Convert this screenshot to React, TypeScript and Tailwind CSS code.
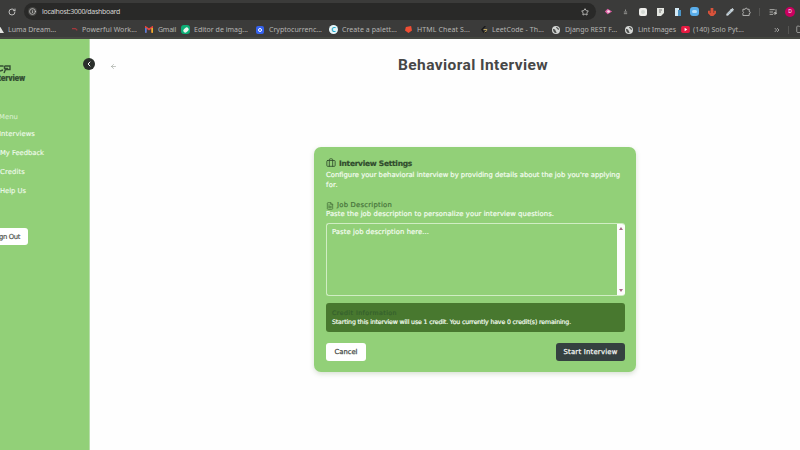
import { useLayoutEffect, useRef, useState } from 'react';
import type { ReactNode } from 'react';
import { ArrowLeft, Briefcase, ChevronLeft, ChevronsRight, FileText, Folder, Info, ListMusic, Pencil, RotateCw, Star } from 'lucide-react';

/** A single line of text whose tracking is computed so it spans `w` pixels. */
function Line({ w, children, className = '' }: { w: number; children: string; className?: string }) {
  const ref = useRef<HTMLSpanElement>(null);
  const [spacing, setSpacing] = useState(0);
  useLayoutEffect(() => {
    if (ref.current) setSpacing((w - ref.current.getBoundingClientRect().width) / children.length);
  }, [w, children]);
  return (
    <span ref={ref} className={`inline-block whitespace-pre ${className}`} style={{ letterSpacing: spacing }}>
      {children}
    </span>
  );
}

function Bookmark({ className, icon, label, w }: { className: string; icon: ReactNode; label: string; w: number }) {
  return (
    <div className={`flex h-full shrink-0 items-center ${className}`}>
      <span className="flex w-[13px] shrink-0 items-center">{icon}</span>
      <Line w={w}>{label}</Line>
    </div>
  );
}

function GlobeIcon() {
  return (
    <svg viewBox="0 0 16 16" className="size-[8px]">
      <circle cx="8" cy="8" r="8" fill="#d3d5d3" />
      <path d="M2 6c3 0 5 1 5 3s2 2 2 5c-4 1-7-3-7-8ZM8 2c0 3 2 2 3 4s2 2 3 1c0-3-3-5-6-5Z" fill="#4a4c4a" />
    </svg>
  );
}

function Browser() {
  return (
    <header className="h-[39px] w-full shrink-0 overflow-hidden bg-[#3b3b3a] font-['Noto_Sans',sans-serif] text-[7px] leading-[10px] text-[#b5b5b3]">
      <div className="flex h-[22px] items-center pt-px">
        <div className="flex w-[24px] justify-end pr-[8px]">
          <RotateCw className="size-[8px] text-[#d0d0ce]" strokeWidth={2.6} />
        </div>
        <div className="flex h-[17px] w-[572px] items-center rounded-full bg-[#292928] pr-[7px] pl-[4px]">
          <span className="flex size-[9px] items-center justify-center rounded-full bg-[#454543]">
            <Info className="size-[7px] text-[#d0d0ce]" strokeWidth={2.4} />
          </span>
          <Line w={78} className="ml-[5px] text-[#d4d4d2]">localhost:3000/dashboard</Line>
          <Star className="ml-auto size-[8px] text-[#dadad8]" strokeWidth={2.4} />
        </div>
        <div className="flex w-[204px] items-center pl-[8px]">
          <span className="flex w-[18px]"><svg viewBox="0 0 10 10" className="size-[9px]"><path d="M1 5 4 2l5 3-5 3z" fill="#df5fa5" /><circle cx="5" cy="5" r="1.5" fill="#f7dbea" /></svg></span>
          <span className="flex w-[17px]"><svg viewBox="0 0 6 8" className="ml-px h-[8px] w-[5px]"><path d="M3 1v2M1 4h4M1 6h4" stroke="#92928f" strokeWidth="1.2" /></svg></span>
          <span className="flex w-[18px]"><i className="flex size-[8px] items-center justify-center rounded-[2px] bg-[#eeeeeb]"><i className="size-[4px] rounded-full bg-[#d2d8d3]" /></i></span>
          <span className="flex w-[17px]"><svg viewBox="0 0 8 8" className="size-[8px]"><path d="M0 0h7v5L4 8H0z" fill="#e4e6e1" /><path d="M2 2h3M2 4h2" stroke="#777" /></svg></span>
          <span className="flex w-[16px]"><svg viewBox="0 0 8 8" className="size-[8px]"><path d="M1 0h4v8H1z" fill="#d5eaf5" /><path d="M4 2h3v6H4z" fill="#4b94c5" /></svg></span>
          <span className="flex w-[18px]"><i className="flex size-[9px] items-center justify-center rounded-[3px] bg-[#59adea]"><i className="h-[3px] w-[5px] rounded-full bg-[#b9e0fa]" /></i></span>
          <span className="flex w-[18px]"><svg viewBox="0 0 9 9" className="size-[8px]"><path d="M3 0h3v3h3v3L6 9H3L0 6V3h3z" fill="#d9533b" /><path d="M2 4h1v1H2zm4 0h1v1H6z" fill="#321f1b" /></svg></span>
          <span className="flex w-[16px]"><Pencil className="size-[8px] text-[#e2e7ea]" fill="#aac1cf" strokeWidth={2.5} /></span>
          <span className="flex w-[17px]"><svg viewBox="0 0 10 10" className="size-[9px]"><path d="M1 2.5h2.5a1.2 1.2 0 0 1 2.4 0H8V5a1.2 1.2 0 0 1 0 2.4v2H1V7a1.2 1.2 0 0 0 0-2z" fill="none" stroke="#bcbcba" strokeWidth="1" strokeLinejoin="round" /></svg></span>
          <span className="h-[8px] w-px bg-[#555553]" />
          <span className="flex w-[25px] justify-center"><ListMusic className="size-[8px] text-[#c5c5c2]" strokeWidth={2.5} /></span>
          <span className="flex size-[10px] items-center justify-center rounded-full bg-[#c9005f] text-[5px] leading-none text-white">D</span>
        </div>
      </div>
      <div className="flex h-[15px] items-center">
        <Bookmark className="-ml-[5px] w-[71px]" w={48} label="Luma Dream..." icon={<svg viewBox="0 0 8 8" className="ml-[2px] size-[7px]"><path d="M3 0 8 8H0z" fill="#e4e4e1" /></svg>} />
        <Bookmark className="w-[79px] pl-[3px]" w={55} label="Powerful Work..." icon={<svg viewBox="0 0 8 8" className="ml-[3px] size-[7px]"><path d="M0 3h4l2 2" stroke="#a3383d" strokeWidth="1.5" fill="none" /></svg>} />
        <Bookmark className="w-[36px]" w={18} label="Gmail" icon={<svg viewBox="0 0 10 8" className="h-[7px] w-[8px]"><path d="M1 8V1l4 3 4-3v7" fill="none" stroke="#e2463d" strokeWidth="2" /><path d="M1 2v6" stroke="#4b82df" strokeWidth="2" /><path d="M9 2v6" stroke="#e8b42d" strokeWidth="2" /></svg>} />
        <Bookmark className="w-[74px]" w={54} label="Editor de imag..." icon={<span className="flex size-[9px] items-center justify-center rounded-[3px] bg-[#0daf76]"><i className="h-[6px] w-[4px] rotate-45 rounded-full bg-[#e7f4ec]" /></span>} />
        <Bookmark className="w-[74px] pl-[1px]" w={53} label="Cryptocurrenc..." icon={<span className="flex size-[8px] items-center justify-center rounded-[2px] bg-[#3562ee]"><i className="size-[4px] rounded-full border border-white" /></span>} />
        <Bookmark className="w-[75px]" w={55} label="Create a palett..." icon={<span className="flex size-[9px] items-center justify-center rounded-full bg-[#e5f6fa] text-[7px] font-bold text-[#26a8c6]">C</span>} />
        <Bookmark className="w-[75px]" w={53} label="HTML Cheat S..." icon={<svg viewBox="0 0 8 8" className="ml-px size-[7px]"><path d="M1 1 7 0l1 5-4 3-4-3z" fill="#ef4e34" /></svg>} />
        <Bookmark className="w-[73px]" w={52} label="LeetCode - Th..." icon={<svg viewBox="0 0 8 8" className="ml-[2px] size-[7px]"><path d="M5 0 1 4l2 3h3" fill="none" stroke="#19191a" strokeWidth="1.5" /><path d="M3 4h4M4 7l3-2" stroke="#d0b467" /></svg>} />
        <Bookmark className="w-[73px]" w={52} label="Django REST F..." icon={<GlobeIcon />} />
        <Bookmark className="w-[55px]" w={38} label="Lint Images" icon={<GlobeIcon />} />
        <Bookmark className="w-[93px]" w={51} label="(140) Solo Pyt..." icon={<svg viewBox="0 0 10 8" className="ml-px h-[7px] w-[9px]"><rect width="10" height="8" rx="2" fill="#e71b42" /><path d="m4 2 3 2-3 2z" fill="white" /></svg>} />
        <ChevronsRight className="size-[8px] shrink-0" strokeWidth={2.5} />
        <span className="ml-[7px] h-[8px] w-px shrink-0 bg-[#555553]" />
        <Folder className="ml-[7px] size-[9px] shrink-0" />
      </div>
      <div className="h-[2px] bg-[#454741]" />
    </header>
  );
}

function Sidebar() {
  return (
    <aside className="relative flex h-full w-[90px] shrink-0 flex-col items-start border-r border-[#b7deaa] bg-[#92d078] text-[6.8px] leading-[10px] text-[#eefaea] [-webkit-text-stroke:0.15px]">
      <div className="mt-[26px] h-[19px] text-[#355033]">
        <svg viewBox="0 0 12 9" className="block h-[9px] w-[12px]" fill="none" stroke="currentColor" strokeWidth="1.4">
          <path d="M0 1h3.5M0 6l3-1M4.5 1H10v3.5H5.5L4 8M4.5 1v2.5H8" />
        </svg>
        <Line w={27} className="-ml-[2px] block h-[9px] font-['Roboto',sans-serif] text-[8.5px] leading-[9px] font-black">terview</Line>
      </div>
      <Line w={19} className="mt-[28px] -ml-px text-[#d3edca]">Menu</Line>
      <Line w={36} className="mt-[7px] -ml-px">Interviews</Line>
      <Line w={44} className="mt-[9px]">My Feedback</Line>
      <Line w={25} className="mt-[9px]">Credits</Line>
      <Line w={26} className="mt-[9px]">Help Us</Line>
      <button className="mt-[32px] flex h-[17px] w-[28px] items-center rounded-r-[3px] bg-white text-[#4f544e] [-webkit-text-stroke:0.2px]"><Line w={21} className="-ml-px">gn Out</Line></button>
      <button className="absolute top-[19px] -right-[6px] flex size-[12px] items-center justify-center rounded-full bg-[#2b302c] text-white"><ChevronLeft className="size-[8px]" strokeWidth={3} /></button>
    </aside>
  );
}

function SettingsCard() {
  return (
    <section className="ml-[224px] flex h-[225px] w-[322px] flex-col rounded-[7px] bg-[#92d078] pt-[11px] pr-[11px] pl-[12px] text-[6.8px] leading-[9px] text-[#f3fcef] shadow-[0_2px_5px_rgba(80,120,65,0.22)] [-webkit-text-stroke:0.2px]">
      <div className="flex h-[10px] items-center text-[#304c2d]">
        <Briefcase className="mr-[4px] size-[10px]" strokeWidth={2} />
        <Line w={73} className="-ml-px text-[7.5px] font-bold">Interview Settings</Line>
      </div>
      <p className="mt-[3px] h-[19px] leading-[9.5px]"><Line w={294} className="block">Configure your behavioral interview by providing details about the job you're applying</Line><Line w={12} className="block">for.</Line></p>
      <div className="mt-[11px] flex h-[9px] items-center text-[#47733b]">
        <FileText className="mr-[3px] size-[8px]" strokeWidth={2.4} />
        <Line w={55}>Job Description</Line>
      </div>
      <Line w={228} className="self-start">Paste the job description to personalize your interview questions.</Line>
      <div className="mt-[4px] flex h-[73px] shrink-0 overflow-hidden rounded-[3px] border border-r-0 border-[#d0edc3]">
        <div className="flex-1 pt-[4px] pl-[5px]"><Line w={97}>Paste job description here...</Line></div>
        <div className="-my-px flex w-[8px] flex-col items-center justify-between bg-[#fcfdfb] py-[4px]">
          <svg viewBox="0 0 4 3" className="h-[3px] w-[4px]"><path d="m0 3 2-3 2 3z" fill="#a66b82" /></svg>
          <svg viewBox="0 0 4 3" className="h-[3px] w-[4px]"><path d="m0 0 2 3 2-3z" fill="#a66b82" /></svg>
        </div>
      </div>
      <div className="mt-[7px] flex h-[29px] shrink-0 flex-col items-start rounded-[3px] bg-[#48782f] pt-[5px] pl-[6px] text-[6.2px] leading-[9px]">
        <Line w={65} className="text-[#35602d]">Credit Information</Line>
        <Line w={239}>Starting this interview will use 1 credit. You currently have 0 credit(s) remaining.</Line>
      </div>
      <div className="mt-[11px] flex justify-between [-webkit-text-stroke:0.25px]">
        <button className="flex h-[18px] w-[40px] items-center justify-center rounded-[3px] bg-white text-[#454b45]"><Line w={23}>Cancel</Line></button>
        <button className="flex h-[18px] w-[69px] items-center justify-center rounded-[3px] bg-[#354140] text-[#f3f6f3]"><Line w={54}>Start Interview</Line></button>
      </div>
    </section>
  );
}

export default function App() {
  return (
    <div className="flex h-[450px] w-[800px] flex-col overflow-hidden bg-[#fefefe] font-['DejaVu_Sans',sans-serif]">
      <Browser />
      <div className="flex min-h-0 flex-1">
        <Sidebar />
        <main className="flex flex-1 flex-col">
          <div className="flex h-[108px] shrink-0 items-start pt-[16px]">
            <ArrowLeft className="mt-[8px] ml-[20px] size-[7px] text-[#969c94]" strokeWidth={2} />
            <h1 className="ml-[281px] font-['Roboto',sans-serif] text-[15.5px] leading-[20px] font-bold text-[#474747]"><Line w={150}>Behavioral Interview</Line></h1>
          </div>
          <SettingsCard />
        </main>
      </div>
    </div>
  );
}
